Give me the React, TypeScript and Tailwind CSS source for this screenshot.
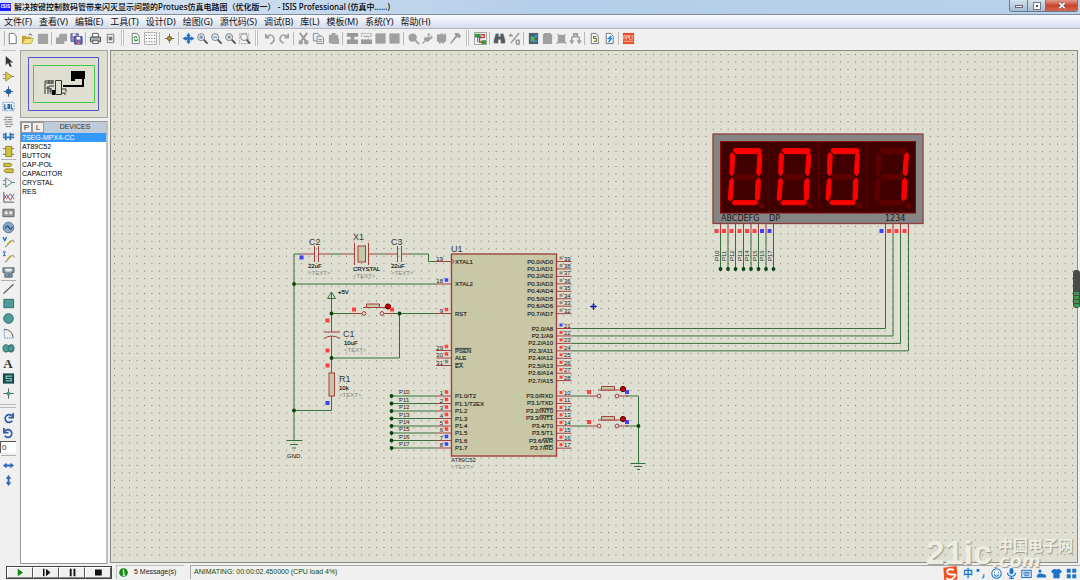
import type { ReactNode } from "react"

const WIRE = "#35703a"
const PIN = "#a24040"
const CHIP = "#c8c8a6"
const RED = "#ff4040"
const BLUE = "#4040ff"
const GRAY = "#8c8c84"

const menus = ["文件(F)", "查看(V)", "编辑(E)", "工具(T)", "设计(D)", "绘图(G)", "源代码(S)", "调试(B)", "库(L)", "模板(M)", "系统(Y)", "帮助(H)"]
const devices = ["7SEG-MPX4-CC", "AT89C52", "BUTTON", "CAP-POL", "CAPACITOR", "CRYSTAL", "RES"]

/* ---------- Icons ---------- */

const page = <path d="M3.5 1.5h5l2.5 3v8h-7.5z" fill="#fff" stroke="#667078" />

const icons: Record<string, ReactNode> = {
  new: page,
  open: (
    <g>
      <path d="M1 4h4l1 1h5v7H1z" fill="#c9a437" />
      <path d="M4 7h9.500l-2.500 5.500H1.500z" fill="#f8df7c" stroke="#a98725" strokeWidth=".6" />
      <path d="M8 3q3-2.500 4 1" fill="none" stroke="#555" />
    </g>
  ),
  save: <path d="M2 2h11v11H3l-1-1z" fill="#a2a2a2" />,
  section: <path d="M5 2h8v8h-3v3H1V6h3z" fill="#a2a2a2" />,
  export: (
    <g>
      <path d="M1 2h8v8H1z" fill="#8f8fc4" stroke="#50508a" />
      <path d="M5 5h8v8H5z" fill="#6a6ab8" stroke="#3c3c80" />
      <path d="M7 5h4v3H7zM3 2h3v2H3z" fill="#fff" />
      <path d="M8 10h3v3H8z" fill="#d66" />
    </g>
  ),
  print: (
    <g>
      <path d="M4 1.500h6v4H4z" fill="#fff" stroke="#555" />
      <path d="M1.500 5.500h11v5h-11z" fill="#a9b4b4" stroke="#454d4d" />
      <path d="M4 9h6v3.500H4z" fill="#dff0df" stroke="#555" />
    </g>
  ),
  area: (
    <g>
      <path d="M3.500 2.500h7v9h-7z" fill="#eee" stroke="#777" />
      <path d="M5 5h4v4H5z" fill="#777" />
    </g>
  ),
  refresh: (
    <g>
      {page}
      <path d="M5 6.500q2-3 4 0M9.500 8q-2 3-4 0" fill="none" stroke="#1c9c2c" strokeWidth="1.400" />
    </g>
  ),
  grid: (
    <g>
      <path d="M.5.5h13v13H.5z" fill="#fafafa" stroke="#aaa" />
      <path d="M2 3.500h11M2 7h11M2 10.500h11" stroke="#333" strokeDasharray="1 2" />
    </g>
  ),
  origin: (
    <g>
      <path d="M7 2v10M2 7h10" stroke="#666" />
      <circle cx="7" cy="7" r="2.300" fill="#a58f30" stroke="#70611e" />
    </g>
  ),
  pan: <path d="M7 1l2 3H8v2h2V5l3 2-3 2V8H8v2h1l-2 3-2-3h1V8H4v1L1 7l3-2v1h2V4H5z" fill="#1f6fd0" stroke="#164f99" strokeWidth=".4" />,
  zoomIn: (
    <g>
      <path d="M8 8l4.500 4.500" stroke="#555" strokeWidth="2" />
      <circle cx="5.500" cy="5.500" r="3.700" fill="#e7f0f5" stroke="#777" />
      <path d="M5.500 3.500v4M3.500 5.500h4" stroke="#3070b0" />
    </g>
  ),
  zoomOut: (
    <g>
      <path d="M8 8l4.500 4.500" stroke="#555" strokeWidth="2" />
      <circle cx="5.500" cy="5.500" r="3.700" fill="#e7f0f5" stroke="#777" />
      <path d="M3.500 5.500h4" stroke="#3070b0" />
    </g>
  ),
  zoomAll: (
    <g>
      <path d="M8 8l4.500 4.500" stroke="#555" strokeWidth="2" />
      <circle cx="5.500" cy="5.500" r="3.700" fill="#e7f0f5" stroke="#777" />
      <path d="M4 4h3v3H4z" fill="#7590a8" />
    </g>
  ),
  zoomArea: (
    <g>
      <path d="M1.500 1.500h10v11h-10z" fill="none" stroke="#aaa" strokeDasharray="2 1" />
      <path d="M9 8l4 4.500" stroke="#555" strokeWidth="2" />
      <circle cx="6.500" cy="5.500" r="3.700" fill="#f0f5f8" stroke="#888" />
    </g>
  ),
  undo: <path d="M3 2v4h4M3 6q5-5 8-1t-3 8" fill="none" stroke="#a0a0a0" strokeWidth="1.800" />,
  redo: <path d="M11 2v4H7M11 6q-5-5-8-1t3 7" fill="none" stroke="#a0a0a0" strokeWidth="1.800" />,
  cut: (
    <g fill="none" stroke="#999" strokeWidth="2">
      <path d="M3 1l6 8M11 1L5 9" />
      <circle cx="4" cy="11" r="1.500" />
      <circle cx="10" cy="11" r="1.500" />
    </g>
  ),
  copy: (
    <g fill="#e8edf2" stroke="#7c8792">
      <path d="M1.500 1.500h5l2 2v6h-7z" />
      <path d="M5.500 4.500h5l2 2v6h-7z" />
      <path d="M7 8h4M7 10h4" />
    </g>
  ),
  paste: <path d="M2 3h3V1h4v2h3v4h1v6H5v-1H2z" fill="#a2a2a2" />,
  blockCopy: <path d="M1 1h12v4H9v3h4v5H1V8h4V5H1z" fill="#999" />,
  blockMove: (
    <g>
      <path d="M1 8h12v5H1z" fill="#999" />
      <path d="M1.500 1.500h11v3h-11zM5 5h4v3" fill="none" stroke="#999" strokeDasharray="2 1" />
    </g>
  ),
  block: <path d="M1.500 1.500h11v11h-11z" fill="#a0a0a0" />,
  pick: (
    <g>
      <circle cx="6" cy="6" r="4.500" fill="#a0a0a0" />
      <path d="M9 9l4 4" stroke="#a0a0a0" strokeWidth="2" />
    </g>
  ),
  make: <path d="M8 1l2 2-2 2 1 1 2-2 2 2-3 2q-2 4-5 2l-3 3-1-1 3-3q-2-1 0-3L8 5 7 3z" fill="#a0a0a0" />,
  packaging: <path d="M2 3l2-1 1 1 2-2 2 2 2-2 1 3v6l-2 1-1 2-2-2-2 2-1-2-2-1z" fill="#a0a0a0" />,
  hammer: <path d="M6 1h4l3 3-2 3-2-2-7 8-1-1 6-8z" fill="#999" />,
  wire: (
    <g>
      <path d="M.5.500h13v13H.5z" fill="#f7f7f7" stroke="#999" />
      <path d="M1 2h6v4H1zM8 9h5v4H8z" fill="#2ca52c" />
      <path d="M7 3h4v3H6v5h3" fill="none" stroke="#d23a2a" strokeWidth="1.500" />
      <path d="M8 5H4v6" fill="none" stroke="#2c5bb8" />
    </g>
  ),
  find: <path d="M3 2h3v3h2V2h3l2 7v3H8.500V8h-3v4H1V9z" fill="#505860" stroke="#888" strokeWidth=".5" />,
  tools: <path d="M2 2l3 3M12 1L3 12M9 9h3v4H9zM1 4h3" fill="none" stroke="#999" strokeWidth="1.600" />,
  sheet: (
    <g>
      <path d="M2 1h10v12H2z" fill="#4c5f6b" />
      <path d="M4 5h4v5H4z" fill="#4ac052" />
      <path d="M8 3h3v3H8zM7 9h4v2H7z" fill="#3f8fd0" />
    </g>
  ),
  newSheet: <path d="M2 3l2-2h6l2 2v10H2z" fill="#a0a0a0" />,
  delSheet: <path d="M2 1l2 2h6l2-2-1 3v6l2 3-3-1H4l-3 1 2-3V4z" fill="#a0a0a0" />,
  exit: <path d="M3 12V6l4-4 4 4v6M1 9l2 3 2-3M9 9l2 3 2-3M5 2h4v3H5z" fill="none" stroke="#a0a0a0" strokeWidth="1.600" />,
  bom: (
    <g>
      {page}
      <path d="M9 5H6v2h3v3H6" fill="none" stroke="#80852a" strokeWidth="1.300" />
    </g>
  ),
  erc: (
    <g>
      {page}
      <path d="M9 4L6 7h3l-3 4" fill="none" stroke="#1684d8" strokeWidth="1.500" />
    </g>
  ),
  ares: (
    <g>
      <path d="M1 1h12v12H1z" fill="#e8502c" />
      <path d="M2 8V4h2v4M5 8V4h2v2H5M10 4H8v4h2M12 4h-1v4M2 10h10" fill="none" stroke="#ffd9cc" strokeWidth=".8" />
    </g>
  ),
  arrow: <path d="M4 1v10l2.500-2.500L8.500 13l2-1-2-4H12z" fill="#333" />,
  gate: (
    <g>
      <path d="M1 5h3M1 9h3M10 7h3" stroke="#777" />
      <path d="M4 2l7 5-7 5z" fill="#d9ca49" stroke="#a39632" />
    </g>
  ),
  junction: (
    <g>
      <path d="M7 1.500v11M2 7h10" stroke="#456" />
      <circle cx="7" cy="7" r="3" fill="#2361a8" />
    </g>
  ),
  label: (
    <g>
      <path d="M1 2.500h12v9H1z" fill="#eef5fc" stroke="#6d9bc7" strokeDasharray="2 1" />
      <path d="M3 4.500v5h2M6.500 5v4h1.500V5zM10 4.500v5h2" fill="none" stroke="#275c98" strokeWidth="1.300" />
    </g>
  ),
  script: <path d="M3 2.500h8M2 5h3m1 0h5M3 7.500h8M3 10h4m1 0h4M4 12.500h6" stroke="#777" />,
  bus: <path d="M1 8h12M4 3v8M9 3v8M1 5h3M9 5h4" fill="none" stroke="#2a72b8" strokeWidth="1.800" />,
  subcircuit: (
    <g>
      <path d="M1 4h12M1 10h12" stroke="#666" />
      <path d="M4 1.500h6.500v11H4z" fill="#cfc03c" stroke="#918421" />
    </g>
  ),
  terminal: (
    <g fill="#d2c340" stroke="#8d8228">
      <path d="M2 2.500h7l2 1.500-2 2H2z" />
      <path d="M4 8.500h8v4H4l-2-2z" />
    </g>
  ),
  devicePin: <path d="M1 5h3M1 9h3M10 7h4M4 2l7 5-7 5z" fill="#f0f0f0" stroke="#557f87" />,
  graph: (
    <g fill="none">
      <path d="M2 1v11h11" stroke="#555" />
      <path d="M2 9l3-5 4 6 4-7" stroke="#c33" />
      <path d="M2 4l3 4 4-5 4 6" stroke="#37c" />
    </g>
  ),
  tape: (
    <g>
      <path d="M1 3.500h12v8H1z" fill="#999" stroke="#666" />
      <path d="M3 6h3v3H3zM8 6h3v3H8z" fill="#eee" />
    </g>
  ),
  generator: (
    <g>
      <circle cx="7" cy="7" r="5.700" fill="#8fa8c0" stroke="#50708e" />
      <path d="M3.500 8q2-5 4-1t3.500-1" fill="none" stroke="#184f9a" strokeWidth="1.400" />
    </g>
  ),
  voltage: (
    <g fill="none">
      <path d="M1 1l2 4 2-4" stroke="#1a5fc0" strokeWidth="1.300" />
      <path d="M3 12q3-1 4-4l3-3M10 6q3-3 3 1" stroke="#777" />
      <path d="M6 9l4-4" stroke="#c0ae2c" strokeWidth="2" />
    </g>
  ),
  current: (
    <g fill="none">
      <path d="M1 1h3M2.500 1v4M1 5h3" stroke="#1a5fc0" />
      <path d="M3 12q3-1 4-4l3-3M10 6q3-3 3 1" stroke="#777" />
      <path d="M6 9l4-4" stroke="#c0ae2c" strokeWidth="2" />
    </g>
  ),
  meter: (
    <g>
      <path d="M1 2h12v5h-2v5H3V7H1z" fill="#8b969c" stroke="#59646b" />
      <path d="M3 3h8l-1 3H4z" fill="#e3f0f8" />
      <circle cx="7.500" cy="9.500" r="1.700" fill="#457fb8" />
    </g>
  ),
  line: <path d="M1.500 12.500l11-10" stroke="#555" strokeWidth="1.300" />,
  box: <path d="M2 2.500h10.500v9H2z" fill="#4c9c98" stroke="#2d6866" />,
  circle: <circle cx="7" cy="7" r="5.200" fill="#4c9c98" stroke="#2d6866" />,
  arc: (
    <g fill="none">
      <path d="M2.500 3v9H12" stroke="#2c78d0" strokeDasharray="1 1" />
      <path d="M2 2.500q9 0 10 9" stroke="#555" />
    </g>
  ),
  shape: (
    <g fill="#4c9c98" stroke="#2d6866">
      <path d="M7 4q-5-3-6 2 0 7 6 4 6 3 6-4-1-5-6-2z" />
      <circle cx="9.500" cy="7" r="3" />
    </g>
  ),
  symbol: (
    <g>
      <path d="M1 1.500h12v11H1z" fill="#17494a" />
      <path d="M11 4.500H4.500V7H10v2.500H4" fill="none" stroke="#87c8c0" strokeWidth="1.300" />
    </g>
  ),
  marker: (
    <g>
      <path d="M7 1.500v11M1.500 7h11" stroke="#555" />
      <circle cx="7" cy="7" r="2.200" fill="#34a391" />
    </g>
  ),
  cw: <path d="M11 4.500A4.200 4.200 0 1 0 11 9.500M12 1v5H7" fill="none" stroke="#2c5cab" strokeWidth="1.800" />,
  ccw: <path d="M3 4.500A4.200 4.200 0 1 1 3 9.500M2 1v5h5" fill="none" stroke="#2c5cab" strokeWidth="1.800" />,
  flipH: <path d="M1 7l4-3v2h4V4l4 3-4 3V8H5v2z" fill="#2f64b8" />,
  flipV: <path d="M7 1L4 5h2v4H4l3 4 3-4H8V5h2z" fill="#2f64b8" />,
}

function IconButton({ name }: { name: string }) {
  return (
    <button type="button" aria-label={name} className="flex h-[15px] w-[14px] items-center justify-center">
      {name === "text" ? (
        <span className="font-['Liberation_Serif',serif] text-[13px] leading-none font-bold text-[#333]">A</span>
      ) : (
        <svg viewBox="0 0 14 14" className="h-[13px] w-[13px]">
          {icons[name]}
        </svg>
      )}
    </button>
  )
}

/* ---------- Toolbars ---------- */

const toolGroups: { grip?: boolean; items: string[] }[] = [
  { items: ["new", "open", "save"] },
  { items: ["section", "export"] },
  { items: ["print", "area"] },
  { grip: true, items: ["refresh", "grid"] },
  { items: ["origin"] },
  { items: ["pan", "zoomIn", "zoomOut", "zoomAll", "zoomArea"] },
  { grip: true, items: ["undo", "redo"] },
  { items: ["cut", "copy", "paste"] },
  { items: ["blockCopy", "blockMove", "block", "block"] },
  { items: ["pick", "make", "packaging", "hammer"] },
  { grip: true, items: ["wire"] },
  { items: ["find", "tools"] },
  { items: ["sheet", "newSheet", "delSheet", "exit"] },
  { items: ["bom", "erc"] },
  { items: ["ares"] },
]

function Toolbar() {
  return (
    <div className="flex h-[21px] shrink-0 items-center bg-[#f0f0f0] pb-[3px] pl-[2px]">
      <span className="h-[15px] w-[3px] border-r border-[#b5b5b5]" />
      {toolGroups.map((group, i) => (
        <div key={i} className="flex items-center">
          {i > 0 && !group.grip && <span className="mr-[2px] ml-[2px] h-[13px] w-px bg-[#b8b8b8]" />}
          {group.grip && <span className="mx-[4px] h-[16px] w-[3px] border-x border-[#c0c0c0] bg-white" />}
          <div className={group.items.length > 3 ? "flex" : "flex gap-px"}>
            {group.items.map((name, j) => (
              <IconButton key={j} name={name} />
            ))}
          </div>
        </div>
      ))}
    </div>
  )
}

const Rule = () => <span className="h-px w-[15px] bg-[#b0b0b0]" />

function ModeBar() {
  const modes = ["arrow", "gate", "junction", "label", "script", "bus", "subcircuit"]
  const gadgets = ["terminal", "devicePin", "graph", "tape", "generator", "voltage", "current", "meter"]
  const shapes = ["line", "box", "circle", "arc", "shape", "text", "symbol", "marker"]
  return (
    <div className="flex w-[20px] shrink-0 flex-col items-center pr-[4px]">
      <span className="mb-[3px] h-px w-[15px] bg-[#c4c4c4]" />
      {modes.map((m) => <IconButton key={m} name={m} />)}
      <Rule />
      {gadgets.map((m) => <IconButton key={m} name={m} />)}
      <Rule />
      {shapes.map((m) => <IconButton key={m} name={m} />)}
      <span className="my-[3px] h-[4px] w-[16px] border-y border-[#b8b8b8]" />
      <IconButton name="cw" />
      <IconButton name="ccw" />
      <input
        aria-label="Angle"
        defaultValue="0"
        className="h-[12px] w-[16px] border-t border-l border-[#555] bg-white px-px text-[8px] leading-none text-[#333]"
      />
      <span className="my-[2px] h-px w-[15px] bg-[#b0b0b0]" />
      <IconButton name="flipH" />
      <IconButton name="flipV" />
    </div>
  )
}

/* ---------- Left panel ---------- */

function DevicePanel() {
  return (
    <aside className="flex w-[88px] shrink-0 flex-col">
      <div className="h-[68px] shrink-0 border border-[#a5a59c] bg-[#dedfd0]">
        <svg viewBox="21 51 86 66" className="h-full w-full">
          <path d="M28.500 57.500h70v53h-70z" fill="none" stroke="#5555cc" />
          <path d="M33.500 65.500h61v37h-61z" fill="none" stroke="#48c848" />
          <path d="M71 71h14v8h-1v8H63v-2h19v-6h-7v2h-4z" fill="#000" />
          <path d="M55.500 80.500h6v14h-6zM45 94v-13h9M46 83h8M49 80v4M52 80v4M46 88h4v4M49 86h5M48 86v8M51 88v6M62 89h4v3M62 93h3v2" fill="none" stroke="#333" />
          <path d="M52 90h3v5h-3z" />
        </svg>
      </div>
      <div className="mt-[3px] flex min-h-0 flex-1 flex-col border border-[#999] border-r-2 border-r-[#c0c0c0] bg-white text-[7px]">
        <div className="flex h-[11px] shrink-0 items-center bg-[#becbd9] text-[#333]">
          <button type="button" className="h-[11px] w-[11px] border border-[#999] bg-[#f0f0f0] text-[8px] leading-[9px]">P</button>
          <button type="button" className="h-[11px] w-[12px] border border-[#999] bg-[#f0f0f0] text-[8px] leading-[9px]">L</button>
          <span className="flex-1 text-center">DEVICES</span>
        </div>
        <ul>
          {devices.map((d, i) => (
            <li key={d} className={i === 0 ? "bg-[#3399ff] pl-px leading-[9px] text-white" : "pl-px leading-[9px] text-black"}>
              {d}
            </li>
          ))}
        </ul>
      </div>
    </aside>
  )
}

/* ---------- Schematic ---------- */

const Wire = ({ d }: { d: string }) => <path d={d} fill="none" stroke={WIRE} />
const Lead = ({ d }: { d: string }) => <path d={d} fill="none" stroke={PIN} />
const Node = ({ x, y }: { x: number; y: number }) => <circle cx={x} cy={y} r="1.900" fill="#0a430d" />
const Probe = ({ x, y, c, size = 4 }: { x: number; y: number; c: string; size?: number }) => (
  <rect x={x - size / 2} y={y - size / 2} width={size} height={size} fill={c} />
)

function Part({ x, y, id, rows }: { x: number; y: number; id: string; rows: [number, number, string][] }) {
  return (
    <g>
      <text x={x} y={y} fontSize="9" fill="#3a3a3a">{id}</text>
      {rows.map(([rx, ry, value]) => (
        <g key={value}>
          <text x={rx} y={ry} fill="#111" stroke="#111" strokeWidth=".15">{value}</text>
          <text x={rx} y={ry + 7} fill="#88887e">&lt;TEXT&gt;</text>
        </g>
      ))}
    </g>
  )
}

function PushButton({ x, y, right }: { x: number; y: number; right: string }) {
  return (
    <g>
      <Lead d={`M${x - 12} ${y}h10M${x + 20} ${y}h9M${x - 1} ${y - 6}h23`} />
      <path d={`M${x + 2.500} ${y - 9.500}h13v3.500h-13z`} fill={CHIP} stroke={PIN} />
      <circle cx={x} cy={y} r="1.900" fill="#dedfd0" stroke={PIN} />
      <circle cx={x + 18} cy={y} r="1.900" fill="#dedfd0" stroke={PIN} />
      <circle cx={x + 24} cy={y - 7} r="2.600" fill="#c00000" stroke="#500" />
      <Probe x={x - 10} y={y - 4} c={RED} />
      <Probe x={x + 28} y={y - 4} c={right} />
    </g>
  )
}

// [name, overlined part]
const rightPins: { top: number; names: [string, string?][]; nums: number[] }[] = [
  { top: 261.5, names: [["P0.0/AD0"], ["P0.1/AD1"], ["P0.2/AD2"], ["P0.3/AD3"], ["P0.4/AD4"], ["P0.5/AD5"], ["P0.6/AD6"], ["P0.7/AD7"]], nums: [39, 38, 37, 36, 35, 34, 33, 32] },
  { top: 328.5, names: [["P2.0/A8"], ["P2.1/A9"], ["P2.2/A10"], ["P2.3/A11"], ["P2.4/A12"], ["P2.5/A13"], ["P2.6/A14"], ["P2.7/A15"]], nums: [21, 22, 23, 24, 25, 26, 27, 28] },
  { top: 396, names: [["P3.0/RXD"], ["P3.1/TXD"], ["P3.2/", "INT0"], ["P3.3/", "INT1"], ["P3.4/T0"], ["P3.5/T1"], ["P3.6/", "WR"], ["P3.7/", "RD"]], nums: [10, 11, 12, 13, 14, 15, 16, 17] },
]

const leftPins: [number, number, string, string | null, boolean?][] = [
  [261.5, 19, "XTAL1", null],
  [284, 18, "XTAL2", BLUE],
  [313.5, 9, "RST", RED],
  [350.5, 29, "PSEN", RED, true],
  [358, 30, "ALE", RED],
  [365.5, 31, "EA", GRAY, true],
  [396, 1, "P1.0/T2", RED],
  [403.5, 2, "P1.1/T2EX", RED],
  [411, 3, "P1.2", RED],
  [418.5, 4, "P1.3", RED],
  [426, 5, "P1.4", RED],
  [433, 6, "P1.5", RED],
  [440.5, 7, "P1.6", BLUE],
  [448, 8, "P1.7", BLUE],
]

function Chip() {
  return (
    <g fill="#222">
      <rect x="451.500" y="254" width="105" height="202" fill={CHIP} stroke={PIN} strokeWidth="1.400" />
      <text x="451" y="252" fontSize="9" fill="#3a3a3a">U1</text>
      {leftPins.map(([y, num, name, color, over]) => (
        <g key={num}>
          <Lead d={`M436 ${y}h15`} />
          <text x="443" y={Math.round(y) - 1} textAnchor="end">{num}</text>
          {color && <Probe x={446.5} y={y - 4} c={color} size={3.5} />}
          <text x="455" y={Math.round(y) + 2} stroke="#222" strokeWidth=".15" className={over ? "overline" : ""}>{name}</text>
        </g>
      ))}
      <path d="M452 259.500l2.500 2-2.500 2" fill="none" stroke={PIN} />
      {rightPins.map((bank, b) =>
        bank.names.map(([name, over], i) => {
          const y = bank.top + i * 7.45
          const color = b === 0 ? GRAY : b === 1 && i === 0 ? BLUE : RED
          return (
            <g key={name + i}>
              <Lead d={`M557 ${y}h14.500`} />
              <Probe x={561} y={y - 3.500} c={color} size={3} />
              <text x="564" y={Math.round(y) - 1}>{bank.nums[i]}</text>
              <text x="553" y={Math.round(y) + 2} textAnchor="end" stroke="#222" strokeWidth=".15">
                {name}
                {over && <tspan className="overline">{over}</tspan>}
              </text>
            </g>
          )
        }),
      )}
      <text x="451" y="462">AT89C52</text>
      <text x="451" y="469" fill="#88887e">&lt;TEXT&gt;</text>
    </g>
  )
}

const segments: Record<string, string> = {
  a: "103,71 180,71 185,77 178,86 108,86 100,77",
  b: "174,91 181,83 186,89 182,147 176,152 170,145",
  c: "168,167 176,159 181,166 179,220 172,228 166,222",
  d: "95,233 102,227 168,227 174,233 168,239 102,239",
  e: "89,168 95,159 101,166 97,220 91,228 85,222",
  f: "91,89 97,83 104,91 101,145 96,152 90,147",
  g: "102,156 110,149 165,149 172,156 165,163 110,163",
}

function Display() {
  const digits = ["abcdef", "abcdef", "abcdef", "bc"]
  const segPins = [720.5, 728, 735.5, 743.5, 751, 758.5, 766, 773.5]
  const comPins = [885.5, 893, 900.5, 908.5]
  return (
    <g>
      {segPins.map((x, i) => (
        <g key={x}>
          <Wire d={`M${x} 234V269`} />
          <Lead d={`M${x} 224V234`} />
          <Node x={x} y={269} />
          <Probe x={x - 4} y={231} c={i > 5 ? BLUE : RED} />
          <text transform={`translate(${Math.round(x) - 2} 261) rotate(-90)`} fill="#222">P1{i}</text>
        </g>
      ))}
      {comPins.map((x, i) => (
        <g key={x}>
          <Wire d={`M571.500 ${328.5 + i * 7.45}H${x}V234`} />
          <Lead d={`M${x} 224V234`} />
          <Probe x={x - 4} y={231} c={i === 0 ? BLUE : RED} />
        </g>
      ))}
      <rect x="713" y="134" width="210" height="89.500" fill="#858585" stroke="#8f3c3c" strokeWidth="1.300" />
      <rect x="720.500" y="141.500" width="195" height="71.500" fill="#400000" stroke="#8a0808" />
      <path d="M769.500 142v71M818.500 142v71M867 142v71" stroke="#600000" />
      {digits.map((on, i) => (
        <g key={i} transform={`translate(${700 + i * 48.8} 125) scale(.3333)`}>
          {Object.entries(segments).map(([s, points]) => (
            <polygon
              key={s}
              points={points}
              fill={on.includes(s) ? "#ff0000" : "#5e0000"}
              stroke={on.includes(s) ? "#ff0000" : "#5e0000"}
              strokeWidth="3"
            />
          ))}
          <circle cx="185" cy="242" r="7.500" fill="#6a0000" />
        </g>
      ))}
      <g fontFamily="DejaVu Sans, sans-serif" fontSize="8" fill="#1a1a1a">
        <text x="721" y="221">ABCDEFG</text>
        <text x="769" y="221">DP</text>
        <text x="885" y="221">1234</text>
      </g>
    </g>
  )
}

function Schematic() {
  return (
    <svg className="block h-full w-full" fontFamily="Liberation Sans, sans-serif" fontSize="6">
      <defs>
        <pattern id="dots" x="3" y="3" width="7.485" height="7.470" patternUnits="userSpaceOnUse">
          <rect width="1" height="1" fill="#77776c" />
        </pattern>
      </defs>
      <rect width="100%" height="100%" fill="url(#dots)" />
      <g transform="translate(-111 -51)">
        {/* Oscillator */}
        <Wire d="M301 254H294V440M331 254h11M379 254h6M409 254h19.500v7.500H436M294 284H436" />
        <Lead d="M301 254h13.500M318.500 254H331M342 254h12.500M368.500 254H379M385 254h12.500M401.500 254H409" />
        <Lead d="M314.500 246v16M318.500 246v16M397.500 246v16M401.500 246v16M354.500 243v22M368.500 243v22" />
        <rect x="358" y="246" width="7.500" height="16" fill={CHIP} stroke={PIN} />
        <Probe x={301.5} y={257.500} c={BLUE} />
        <Node x={294} y={284} />
        <Part x={309} y={245} id="C2" rows={[[308, 268, "22uF"]]} />
        <Part x={353} y={240} id="X1" rows={[[353, 271, "CRYSTAL"]]} />
        <Part x={391} y={245} id="C3" rows={[[391, 268, "22uF"]]} />

        {/* Reset */}
        <Wire d="M331.500 321V292l-4 6.500h8l-4-6.500M331.500 313.500H352M393 313.500H436M399.500 313.500V358H331.500M331.500 350V364M331.500 402v8.500H294" />
        <Lead d="M331.500 321v11M324 332h16M324 338.500q7.500-5 16 0M331.500 336v14M331.500 364v9M331.500 396v6" />
        <rect x="329" y="373" width="5.500" height="23" fill={CHIP} stroke={PIN} />
        <PushButton x={364} y={313.5} right={RED} />
        <Node x={331.500} y={313.500} />
        <Node x={399.500} y={313.500} />
        <Node x={331.500} y={358} />
        <Node x={294} y={410.500} />
        <Probe x={327.500} y={320.500} c={RED} />
        <Probe x={327.500} y={350.500} c={RED} />
        <Probe x={327.500} y={365.500} c={RED} />
        <Probe x={327.500} y={403} c={BLUE} />
        <text x="338" y="294" fill="#111" stroke="#111" strokeWidth=".15">+5V</text>
        <Part x={343} y={337} id="C1" rows={[[344, 345, "10uF"]]} />
        <Part x={339} y={382} id="R1" rows={[[339, 390, "10k"]]} />
        <Wire d="M286.500 440.500h16M290 444.500h8M292 448h4" />
        <text x="287" y="458" fill="#111">GND</text>

        {/* Port 1 nets */}
        {leftPins.slice(6).map(([y], i) => (
          <g key={y}>
            <Wire d={`M391.500 ${y}H436`} />
            <Node x={391.500} y={y} />
            <text x="399" y={Math.round(y) - 2} fill="#222">P1{i}</text>
          </g>
        ))}

        {/* Keys on port 3 */}
        <Wire d="M571.500 396H587M571.500 426H587M626 396h12.500V463M626 426h12.500M630.500 463.500h15M634 466.500h8M637 469.500h3" />
        <PushButton x={599} y={396} right={BLUE} />
        <PushButton x={599} y={426} right={BLUE} />
        <Node x={638.500} y={426} />

        <Chip />
        <Display />
        <path d="M593.500 303v7M590 306.500h7M593.500 304l2.500 2.500-2.500 2.500-2.500-2.500z" fill="none" stroke="#2222b8" />
      </g>
    </svg>
  )
}

/* ---------- Bottom ---------- */

const playback: [string, string, string][] = [
  ["Play", "M3 1l7 5-7 5z", "#0a8a0a"],
  ["Step", "M2 1h2v10H2zM6 1l6 5-6 5z", "#111"],
  ["Pause", "M3 1h2.500v10H3zM8 1h2.500v10H8z", "#111"],
  ["Stop", "M2 2h9v8H2z", "#111"],
]

function StatusBar() {
  return (
    <footer className="flex h-[16px] shrink-0 items-center bg-[#f0f0f0] pl-[6px] text-[7px]">
      <div className="flex h-[13px] border border-[#444] bg-[#555]">
        {playback.map(([name, d, color]) => (
          <button key={name} type="button" aria-label={name} className="flex w-[26px] items-center justify-center border border-t-white border-r-[#555] border-b-[#888] border-l-white bg-[#f0f0f0]">
            <svg viewBox="0 0 12 12" className="h-[9px] w-[10px]">
              <path d={d} fill={color} />
            </svg>
          </button>
        ))}
      </div>
      <div className="ml-[4px] flex h-[14px] w-[68px] items-center gap-[6px] border-t border-l border-[#c0c0c0] pl-[2px] text-[#222]">
        <svg viewBox="0 0 10 10" className="h-[9px] w-[9px]">
          <circle cx="5" cy="5" r="4.800" fill="#138a13" />
          <path d="M4 4.500h1.500V8M4 8h3" fill="none" stroke="#fff" strokeWidth="1.200" />
          <circle cx="5" cy="2.500" r=".9" fill="#fff" />
        </svg>
        5 Message(s)
      </div>
      <div className="ml-[6px] flex h-[14px] flex-1 items-center border-t border-l border-[#a8a8a8] pl-[3px] text-[#0c4a0c]">
        ANIMATING: 00:00:02.450000 (CPU load 4%)
      </div>
    </footer>
  )
}

const trayIcons: ReactNode[] = [
  <path d="M3 2v2M1.500 2h2v2h-2zM10 8v3l-2 2" fill="none" stroke="currentColor" strokeWidth="1.500" />,
  <g fill="none" stroke="currentColor" strokeWidth="1.300">
    <circle cx="7" cy="7" r="6" />
    <path d="M4 8q3 5 6 0M4.500 5v1M9.500 5v1" />
  </g>,
  <g>
    <rect x="4.500" y="0" width="5" height="8" rx="2.500" fill="currentColor" />
    <path d="M2 6q0 4.500 5 4.500T12 6M7 10v3M4 13.300h6" fill="none" stroke="currentColor" strokeWidth="1.500" />
  </g>,
  <path d="M1 3h12v9H1zM3 5.500h8M3 7.500h8M4 10h6" fill="none" stroke="currentColor" strokeWidth="1.300" />,
  <path d="M5 2a2 2 0 1 1 0 4 2 2 0 0 1 0-4zM1 12q0-5 4-5t4 1q4-1 4 4z" fill="currentColor" />,
  <path d="M4 1q3 2 6 0l4 3-2 3-1-1v7H3V6L2 7 0 4z" fill="currentColor" />,
  <path d="M1 1h5v5H1zM8 1h5v5H8zM1 8h5v5H1zM8 8h5v5H8z" fill="currentColor" />,
]

function ImeTray() {
  return (
    <div className="absolute right-[3px] bottom-0 flex h-[14px] items-center text-[#1b74c8]">
      <svg viewBox="0 0 18 18" className="mr-[4px] h-[17px] w-[18px]">
        <path d="M2 3l14-2 1 14-14 3z" fill="#f0501c" />
        <path d="M13 5Q6 3.500 6 7t6 3-1 5q-3 1-6-1" fill="none" stroke="#fff" strokeWidth="2" />
      </svg>
      <span className="mr-[3px] font-['Noto_Sans_CJK_SC',sans-serif] text-[10px] leading-none font-bold">中</span>
      <div className="flex gap-[4px]">
        {trayIcons.map((icon, i) => (
          <svg key={i} viewBox="0 0 14 14" className="h-[11px] w-[11px]">
            {icon}
          </svg>
        ))}
      </div>
    </div>
  )
}

function Watermark() {
  return (
    <div className="pointer-events-none absolute right-[7px] bottom-[13px] flex items-end font-bold text-[#ededE4] [text-shadow:1px_1px_1px_#9a9a90]">
      <span className="font-['Liberation_Sans',sans-serif] text-[34px] leading-[30px]">21ic</span>
      <div className="flex flex-col">
        <span className="pl-[6px] font-['Noto_Sans_CJK_SC',sans-serif] text-[15px] leading-[18px]">中国电子网</span>
        <span className="font-['DejaVu_Sans',sans-serif] text-[18px] leading-[13px] italic">.com</span>
      </div>
    </div>
  )
}

export default function App() {
  return (
    <div className="relative flex h-screen flex-col overflow-hidden bg-[#f0f0f0] font-['Liberation_Sans',sans-serif]">
      <header className="flex h-[15px] shrink-0 items-start border-b border-[#7f8ca0] bg-linear-to-r from-[#dfe9f4] via-[#b5cee9] to-[#b9d1ea]">
        <span className="mt-[3px] flex h-[8px] w-[11px] items-center justify-center bg-[#1a1aff] text-[5px] font-bold text-white">ISIS</span>
        <h1 className="ml-[3px] flex-1 font-['Noto_Sans','Noto_Sans_CJK_SC',sans-serif] text-[8px] leading-[14px] font-medium whitespace-nowrap text-black">
          解决按键控制数码管带来闪灭显示问题的Protues仿真电路图（优化版一） - ISIS Professional (仿真中......)
        </h1>
        <div className="mr-[2px] flex h-[12px] overflow-hidden rounded-b-[3px] border border-t-0 border-[#68788c]">
          <button type="button" aria-label="Minimize" className="flex w-[18px] items-center justify-center border-r border-[#68788c] bg-linear-to-b from-[#d5e2ef] to-[#a5bcd2]">
            <span className="mt-[2px] h-[3px] w-[8px] border border-[#667] bg-white" />
          </button>
          <button type="button" aria-label="Restore" className="flex w-[18px] items-center justify-center border-r border-[#68788c] bg-linear-to-b from-[#d5e2ef] to-[#a5bcd2]">
            <span className="h-[6px] w-[6px] border-2 border-white bg-[#556] outline outline-[#778]" />
          </button>
          <button type="button" aria-label="Close" className="flex w-[31px] items-center justify-center bg-linear-to-b from-[#e29a8c] via-[#c8442c] to-[#d5694c]">
            <svg viewBox="0 0 8 8" className="h-[7px] w-[8px]">
              <path d="M1 1l6 6M7 1L1 7" stroke="#555" strokeWidth="3" />
              <path d="M1 1l6 6M7 1L1 7" stroke="#fff" strokeWidth="1.800" />
            </svg>
          </button>
        </div>
      </header>

      <nav className="flex h-[14px] shrink-0 items-center gap-[7px] border-b border-[#b4b4bc] bg-linear-to-b from-[#fafbfe] to-[#d6dcee] pl-[4px]">
        {menus.map((m) => (
          <button key={m} type="button" className="font-['Noto_Sans','Noto_Sans_CJK_SC',sans-serif] text-[9px] leading-[12px] whitespace-nowrap text-[#111]">
            {m}
          </button>
        ))}
      </nav>

      <Toolbar />

      <div className="flex min-h-0 flex-1">
        <ModeBar />
        <DevicePanel />
        <main className="mr-[2px] mb-px ml-[2px] min-w-0 flex-1 border border-[#8c8c84] bg-[#dedfd0]">
          <Schematic />
        </main>
      </div>

      <StatusBar />

      <Watermark />
      <ImeTray />
      <div className="absolute top-[270px] right-0 flex h-[38px] w-[7px] flex-col justify-end gap-px rounded-[3px] bg-[#4a4a4a] p-px">
        <span className="h-[3px] bg-[#3c9a50]" />
        <span className="h-[3px] bg-[#3c9a50]" />
        <span className="h-[3px] bg-[#3c9a50]" />
        <span className="h-[3px] bg-[#3c9a50]" />
      </div>
    </div>
  )
}
